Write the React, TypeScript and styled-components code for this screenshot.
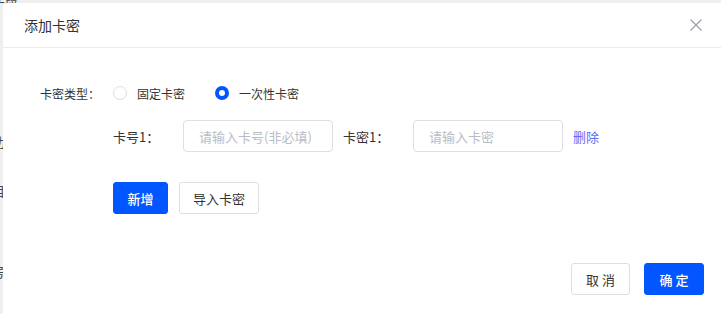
import React, { useState } from "react";
import { createGlobalStyle, styled } from "styled-components";

const blue = "#0256ff";
const border = "#dcdfe6";

const GlobalCss = createGlobalStyle`
  html, body {
    margin: 0;
    padding: 0;
    background: #f0f0f0;
    font-family: "Noto Sans CJK SC", "Liberation Sans", sans-serif;
    overflow: hidden;
  }
`;

const Backdrop = styled.div`
  position: relative;
  width: 721px;
  height: 314px;
  padding: 3px 0 0 3px;
  box-sizing: border-box;
  background: #efefef;
`;

const BehindText = styled.span<{ $top: number }>`
  position: absolute;
  left: -8px;
  top: ${(p) => p.$top}px;
  font-size: 13px;
  color: #444;
`;

const Dialog = styled.div`
  position: relative;
  background: #fff;
  border-radius: 4px 0 0 0;
  height: 100%;
  display: flex;
  flex-direction: column;
`;

const Header = styled.div`
  height: 44px;
  display: flex;
  align-items: center;
  justify-content: space-between;
  padding: 0 18px 0 21px;
  border-bottom: 1px solid #ebebeb;
`;

const Title = styled.span`
  font-size: 14px;
  color: #333;
`;

const Close = styled.button`
  border: 0;
  background: none;
  padding: 0;
  width: 14px;
  height: 14px;
  display: flex;
  cursor: pointer;
`;

const Body = styled.div`
  padding: 32px 0 0 37px;
  display: flex;
  flex-direction: column;
  flex: 1;
`;

const TypeRow = styled.div`
  display: flex;
  align-items: center;
  height: 26px;
`;

const Label = styled.span`
  font-size: 12px;
  color: #333;
`;

const RadioGroup = styled.div`
  display: flex;
  align-items: center;
  gap: 30px;
  margin-left: 13px;
`;

const RadioItem = styled.label`
  display: flex;
  align-items: center;
  gap: 10px;
  font-size: 12px;
  color: #333;
  cursor: pointer;
`;

const RadioDot = styled.span<{ $on: boolean }>`
  width: 14px;
  height: 14px;
  border-radius: 50%;
  box-sizing: border-box;
  border: ${(p) => (p.$on ? `4.5px solid ${blue}` : `1px solid ${border}`)};
  background: #fff;
`;

const CardRow = styled.div`
  display: flex;
  align-items: center;
  margin: 14px 0 0 73px;
  height: 32px;
`;

const FieldLabel = styled.span`
  font-size: 13px;
  color: #333;
  width: 70px;
`;

const Input = styled.input`
  width: 150px;
  height: 32px;
  box-sizing: border-box;
  border: 1px solid ${border};
  border-radius: 4px;
  padding: 0 10px 0 15px;
  font-size: 13px;
  font-family: inherit;
  color: #333;
  outline: none;
  margin-right: 10px;
  &::placeholder {
    color: #b8bcc5;
  }
`;

const DeleteLink = styled.a`
  font-size: 13px;
  color: #5a6ef2;
  cursor: pointer;
`;

const ButtonRow = styled.div<{ $end?: boolean }>`
  display: flex;
  gap: ${(p) => (p.$end ? "14px" : "11px")};
  justify-content: ${(p) => (p.$end ? "flex-end" : "flex-start")};
`;

const Actions = styled(ButtonRow)`
  margin: 30px 0 0 73px;
`;

const Footer = styled(ButtonRow)`
  margin-top: auto;
  padding: 0 17px 19px 0;
`;

const Button = styled.button<{ $primary?: boolean; $w: number }>`
  height: 32px;
  width: ${(p) => p.$w}px;
  box-sizing: border-box;
  border-radius: 3px;
  font-size: 13px;
  font-family: inherit;
  cursor: pointer;
  border: 1px solid ${(p) => (p.$primary ? blue : border)};
  background: ${(p) => (p.$primary ? blue : "#fff")};
  color: ${(p) => (p.$primary ? "#fff" : "#333")};
  font-weight: ${(p) => (p.$primary ? 500 : 400)};
`;

export default function App() {
  const [type, setType] = useState("once");
  return (
    <Backdrop>
      <GlobalCss />
      <BehindText $top={-10}>字段</BehindText>
      <BehindText $top={132}>功</BehindText>
      <BehindText $top={181}>目</BehindText>
      <BehindText $top={262}>号</BehindText>
      <Dialog>
        <Header>
          <Title>添加卡密</Title>
          <Close aria-label="close">
            <svg width="14" height="14" viewBox="0 0 14 14">
              <path d="M1.5 1.5 L12.5 12.5 M12.5 1.5 L1.5 12.5" stroke="#9a9ea8" strokeWidth="1.2" />
            </svg>
          </Close>
        </Header>
        <Body>
          <TypeRow>
            <Label>卡密类型：</Label>
            <RadioGroup>
              <RadioItem onClick={() => setType("fixed")}>
                <RadioDot $on={type === "fixed"} />
                固定卡密
              </RadioItem>
              <RadioItem onClick={() => setType("once")}>
                <RadioDot $on={type === "once"} />
                一次性卡密
              </RadioItem>
            </RadioGroup>
          </TypeRow>
          <CardRow>
            <FieldLabel>卡号1：</FieldLabel>
            <Input placeholder="请输入卡号(非必填)" />
            <FieldLabel>卡密1：</FieldLabel>
            <Input placeholder="请输入卡密" />
            <DeleteLink>删除</DeleteLink>
          </CardRow>
          <Actions>
            <Button $primary $w={55}>新增</Button>
            <Button $w={80}>导入卡密</Button>
          </Actions>
        </Body>
        <Footer $end>
          <Button $w={59}>取 消</Button>
          <Button $primary $w={60}>确 定</Button>
        </Footer>
      </Dialog>
    </Backdrop>
  );
}
